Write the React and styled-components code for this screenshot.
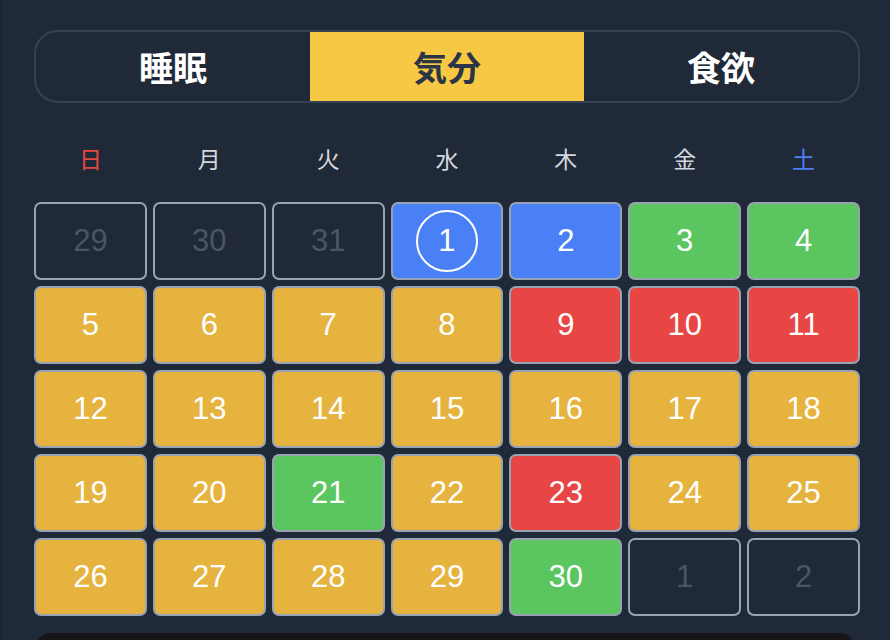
import React from 'react';
import styled, { createGlobalStyle, css } from 'styled-components';

const GlobalStyle = createGlobalStyle`
  html, body {
    margin: 0;
    padding: 0;
    background: #202938;
  }
  body {
    font-family: "Liberation Sans", "Noto Sans CJK JP", sans-serif;
    -webkit-font-smoothing: antialiased;
  }
`;

const TABS = ['睡眠', '気分', '食欲'];
const WEEKDAYS = ['日', '月', '火', '水', '木', '金', '土'];

const COLORS = {
  good: '#5bc560',
  ok: '#e6b33e',
  bad: '#e84545',
  blue: '#4a80f6',
};

// d: day number, m: mood key, out: day from another month
const DAYS = [
  { d: 29, out: true }, { d: 30, out: true }, { d: 31, out: true },
  { d: 1, m: 'blue', today: true }, { d: 2, m: 'blue' }, { d: 3, m: 'good' }, { d: 4, m: 'good' },
  { d: 5, m: 'ok' }, { d: 6, m: 'ok' }, { d: 7, m: 'ok' }, { d: 8, m: 'ok' },
  { d: 9, m: 'bad' }, { d: 10, m: 'bad' }, { d: 11, m: 'bad' },
  { d: 12, m: 'ok' }, { d: 13, m: 'ok' }, { d: 14, m: 'ok' }, { d: 15, m: 'ok' },
  { d: 16, m: 'ok' }, { d: 17, m: 'ok' }, { d: 18, m: 'ok' },
  { d: 19, m: 'ok' }, { d: 20, m: 'ok' }, { d: 21, m: 'good' }, { d: 22, m: 'ok' },
  { d: 23, m: 'bad' }, { d: 24, m: 'ok' }, { d: 25, m: 'ok' },
  { d: 26, m: 'ok' }, { d: 27, m: 'ok' }, { d: 28, m: 'ok' }, { d: 29, m: 'ok' },
  { d: 30, m: 'good' }, { d: 1, out: true }, { d: 2, out: true },
];

const App = () => {
  return (
    <>
      <GlobalStyle />
      <Page>
        <TabBar>
          {TABS.map((t, i) => (
            <Tab key={t} $active={i === 1}>{t}</Tab>
          ))}
        </TabBar>
        <WeekRow>
          {WEEKDAYS.map((w, i) => (
            <WeekLabel key={w} $day={i}>{w}</WeekLabel>
          ))}
        </WeekRow>
        <Grid>
          {DAYS.map((day, i) => (
            <Cell key={i} $mood={day.m} $out={day.out}>
              {day.today ? <TodayRing>{day.d}</TodayRing> : day.d}
            </Cell>
          ))}
        </Grid>
        <BottomSheet />
      </Page>
    </>
  );
};

const Page = styled.div`
  height: 640px;
  box-sizing: border-box;
  padding: 30px 30px 0 32px;
  border-left: 2px solid #1b2230;
  overflow: hidden;
  display: flex;
  flex-direction: column;

  & > * {
    flex-shrink: 0;
  }
`;

const TabBar = styled.div`
  display: grid;
  grid-template-columns: repeat(3, 1fr);
  height: 73px;
  box-sizing: border-box;
  border: 2px solid #364153;
  border-radius: 24px;
  overflow: hidden;
`;

const Tab = styled.div`
  display: flex;
  align-items: center;
  justify-content: center;
  font-family: "Noto Sans CJK JP", sans-serif;
  font-size: 34px;
  font-weight: 700;
  color: #ffffff;
  ${(p) =>
    p.$active &&
    css`
      background: #f6c844;
      color: #2c3545;
    `}
`;

const WeekRow = styled.div`
  display: grid;
  grid-template-columns: repeat(7, 1fr);
  gap: 6px;
  height: 66px;
  margin-top: 22px;
  margin-bottom: 11px;
  align-items: center;
`;

const WeekLabel = styled.div`
  text-align: center;
  font-family: "Noto Sans CJK JP", sans-serif;
  font-size: 23px;
  font-weight: 400;
  color: ${(p) => (p.$day === 0 ? '#e84545' : p.$day === 6 ? '#4a80f6' : '#d4d8de')};
`;

const Grid = styled.div`
  display: grid;
  grid-template-columns: repeat(7, 1fr);
  grid-auto-rows: 78px;
  gap: 6px;
`;

const Cell = styled.div`
  display: flex;
  align-items: center;
  justify-content: center;
  box-sizing: border-box;
  border: 2px solid #99a2b2;
  border-radius: 7px;
  font-size: 31px;
  color: ${(p) => (p.$out ? '#4b5565' : '#ffffff')};
  background: ${(p) => (p.$mood ? COLORS[p.$mood] : 'transparent')};
`;

const TodayRing = styled.div`
  width: 62px;
  height: 62px;
  box-sizing: border-box;
  border: 2px solid #ffffff;
  border-radius: 50%;
  display: flex;
  align-items: center;
  justify-content: center;
`;

const BottomSheet = styled.div`
  margin: 17px 6px 0 2px;
  height: 40px;
  background: #161618;
  border-radius: 14px 14px 0 0;
`;

export default App;
